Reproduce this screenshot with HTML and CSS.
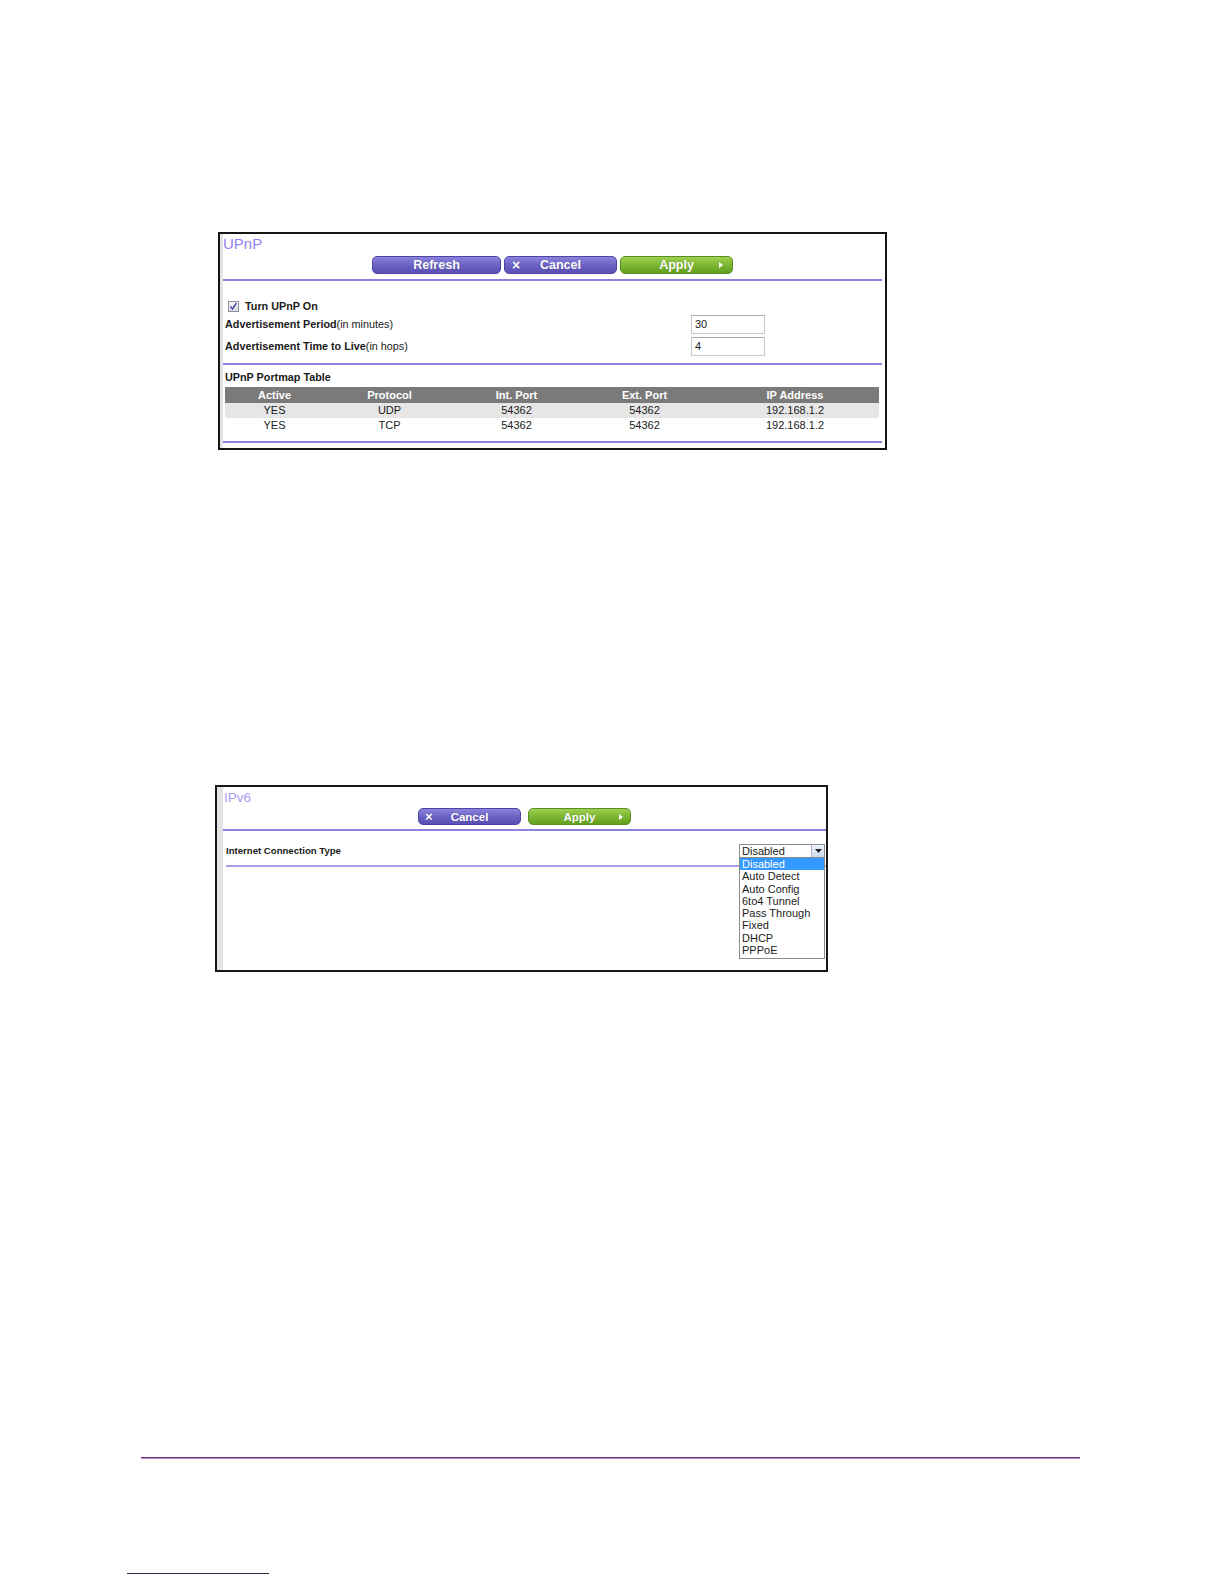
FILE: index.html
```html
<!DOCTYPE html>
<html>
<head>
<meta charset="utf-8">
<link rel="stylesheet" href="styles.css">
</head>
<body>
<div class="page">
  <div class="panel upnp">
    <div class="panel-inner">
      <div class="title">UPnP</div>
      <div class="btns">
        <span class="btn purple w-refresh">Refresh</span>
        <span class="btn purple w-cancel"><span class="x">×</span>Cancel</span>
        <span class="btn green w-apply">Apply<span class="arr"></span></span>
      </div>
      <div class="rule"></div>
      <div class="form">
        <div class="row check-row">
          <span class="cb"><svg width="11" height="11" viewBox="0 0 11 11"><path d="M2.5 5.5 L4.5 8 L8.5 2" fill="none" stroke="#4a4aa8" stroke-width="1.4"/></svg></span>
          <span class="b">Turn UPnP On</span>
        </div>
        <div class="row field-row">
          <span class="lbl"><span class="b">Advertisement Period</span>(in minutes)</span>
          <span class="inp">30</span>
        </div>
        <div class="row field-row">
          <span class="lbl"><span class="b">Advertisement Time to Live</span>(in hops)</span>
          <span class="inp">4</span>
        </div>
      </div>
      <div class="rule r2"></div>
      <div class="tbl-title b">UPnP Portmap Table</div>
      <table class="tbl">
        <thead>
          <tr><th class="c1">Active</th><th class="c2">Protocol</th><th class="c3">Int. Port</th><th class="c4">Ext. Port</th><th class="c5">IP Address</th></tr>
        </thead>
        <tbody>
          <tr class="odd"><td>YES</td><td>UDP</td><td>54362</td><td>54362</td><td>192.168.1.2</td></tr>
          <tr><td>YES</td><td>TCP</td><td>54362</td><td>54362</td><td>192.168.1.2</td></tr>
        </tbody>
      </table>
      <div class="rule r3"></div>
    </div>
  </div>

  <div class="panel ipv6">
    <div class="panel-inner">
      <div class="title t2">IPv6</div>
      <div class="btns b2">
        <span class="btn purple small"><span class="x">×</span>Cancel</span>
        <span class="btn green small">Apply<span class="arr"></span></span>
      </div>
      <div class="rule"></div>
      <div class="conn-row">
        <span class="b conn-lbl">Internet Connection Type</span>
        <div class="sel-wrap">
          <div class="sel"><span>Disabled</span><span class="sel-btn"><svg width="7" height="4" viewBox="0 0 7 4"><path d="M0 0 H7 L3.5 4 Z" fill="#222"/></svg></span></div>
          <ul class="menu">
            <li class="on">Disabled</li>
            <li>Auto Detect</li>
            <li>Auto Config</li>
            <li>6to4 Tunnel</li>
            <li>Pass Through</li>
            <li>Fixed</li>
            <li>DHCP</li>
            <li>PPPoE</li>
          </ul>
        </div>
      </div>
      <div class="rule r4"></div>
    </div>
  </div>

  <div class="footer-line"></div>
  <div class="short-line"></div>
</div>
</body>
</html>
```

FILE: styles.css
```css
html, body {
  margin: 0;
  padding: 0;
  background: #fff;
}
body {
  font-family: "Liberation Sans", Arial, sans-serif;
  color: #1a1a1a;
}
.page {
  padding-top: 232px;
  width: 1224px;
  height: 1352px;
}
.b { font-weight: bold; }

.panel {
  border: 2px solid #161616;
  box-sizing: border-box;
  background: #fff;
}
.upnp {
  margin-left: 218px;
  width: 669px;
  height: 218px;
}
.panel-inner {
  border-left: 3px solid #e3e3e3;
  padding-right: 3px;
  height: 100%;
  box-sizing: border-box;
  position: relative;
}
.title {
  color: #9283ee;
  font-size: 15px;
  line-height: 16px;
  padding-top: 2px;
  height: 16px;
}
.btns {
  display: flex;
  justify-content: center;
  gap: 3px;
  margin-top: 4px;
}
.btn {
  position: relative;
  display: flex;
  align-items: center;
  justify-content: center;
  height: 18px;
  border-radius: 5px;
  color: #fff;
  font-weight: bold;
  font-size: 12.5px;
  box-sizing: border-box;
  text-shadow: 0 0 1px rgba(0,0,0,0.25);
}
.purple {
  background: linear-gradient(#8a82dc, #6a60c4 55%, #5a50b4);
  border: 1px solid #4d45a3;
}
.green {
  background: linear-gradient(#9fd04e, #79b431 55%, #62a020);
  border: 1px solid #5a8f24;
}
.w-refresh { width: 129px; }
.w-cancel { width: 113px; }
.w-apply { width: 113px; }
.x {
  position: absolute;
  left: 7px;
  top: 50%;
  transform: translateY(-52%);
  font-size: 14px;
}
.arr {
  position: absolute;
  right: 9px;
  top: 50%;
  margin-top: -3px;
  width: 0;
  height: 0;
  border-left: 4px solid #fff;
  border-top: 3px solid transparent;
  border-bottom: 3px solid transparent;
}
.rule {
  height: 2px;
  background: #8c80e0;
  margin-top: 5px;
}
.form {
  padding-left: 2px;
  padding-top: 18px;
}
.row {
  display: flex;
  align-items: center;
  font-size: 10.8px;
}
.check-row {
  height: 14px;
  padding-left: 3px;
}
.cb {
  width: 11px;
  height: 11px;
  border: 1px solid #8d8d9e;
  background: linear-gradient(#f4f4fa, #dcdce8);
  box-sizing: border-box;
  display: inline-flex;
  margin-right: 6px;
}
.cb svg { margin: -1px; }
.field-row {
  height: 20px;
  margin-top: 1px;
}
.field-row + .field-row { margin-top: 2px; }
.lbl {
  width: 466px;
  flex: none;
}
.inp {
  width: 74px;
  height: 19px;
  box-sizing: border-box;
  border: 1px solid #c8c8c8;
  border-top-color: #a9a9a9;
  padding-left: 3px;
  line-height: 17px;
  font-size: 11px;
}
.r2 { margin-top: 7px; }
.tbl-title {
  font-size: 10.8px;
  line-height: 14px;
  margin-top: 5px;
  padding-left: 2px;
}
.tbl {
  border-collapse: collapse;
  margin-left: 2px;
  margin-top: 3px;
  width: 654px;
  font-size: 11px;
  table-layout: fixed;
}
.tbl th, .tbl td {
  padding: 0;
  text-align: center;
  height: 15px;
  line-height: 15px;
}
.tbl th {
  background: #7a7a7a;
  color: #fff;
  font-weight: bold;
  height: 16px;
}
.tbl .c1 { width: 99px; }
.tbl .c2 { width: 131px; }
.tbl .c3 { width: 123px; }
.tbl .c4 { width: 133px; }
.tbl .c5 { width: 168px; }
.tbl tr.odd td { background: #e6e6e6; }
.r3 { margin-top: 8px; }

/* IPv6 */
.ipv6 {
  margin-top: 335px;
  margin-left: 215px;
  width: 613px;
  height: 187px;
}
.ipv6 .panel-inner {
  border-left-width: 6px;
  padding-right: 0;
}
.t2 {
  font-size: 13.5px;
  color: #a89ef2;
  padding-top: 3px;
  height: 15px;
  line-height: 15px;
  padding-left: 1px;
}
.b2 { gap: 7px; margin-top: 3px; }
.small {
  width: 103px;
  height: 17px;
  font-size: 11.5px;
}
.small .x { left: 6px; font-size: 13px; }
.small .arr { right: 7px; }
.b2 + .rule { margin-top: 4px; }
.conn-row {
  display: flex;
  align-items: flex-start;
  justify-content: space-between;
  padding-left: 3px;
  padding-right: 1px;
  margin-top: 13px;
  height: 15px;
}
.conn-lbl {
  font-size: 9.6px;
  line-height: 14px;
}
.sel-wrap {
  position: relative;
  width: 86px;
}
.sel {
  height: 14px;
  border: 1px solid #8a8a8a;
  box-sizing: border-box;
  display: flex;
  align-items: center;
  justify-content: space-between;
  font-size: 11px;
  padding-left: 2px;
  background: #fff;
}
.sel-btn {
  width: 12px;
  height: 12px;
  background: linear-gradient(#eef3fa, #cdd9ea);
  border-left: 1px solid #a8b4c8;
  display: flex;
  align-items: center;
  justify-content: center;
}
.menu {
  position: absolute;
  top: 14px;
  left: 0;
  width: 86px;
  box-sizing: border-box;
  margin: 0;
  padding: 0 0 2px 0;
  list-style: none;
  border: 1px solid #8a8a8a;
  border-top: none;
  background: #fff;
  font-size: 11px;
  z-index: 2;
}
.menu li {
  height: 12.3px;
  line-height: 12px;
  padding-left: 2px;
  color: #1c1c1c;
  white-space: nowrap;
}
.menu li.on {
  background: #3399ff;
  color: #fff;
}
.r4 {
  margin-top: 6px;
  margin-left: 3px;
  background: #a79ee9;
}

.footer-line {
  margin-top: 485px;
  margin-left: 141px;
  width: 939px;
  height: 2px;
  box-sizing: border-box;
  border-top: 1px solid #7a2f8b;
  border-bottom: 1px solid #b48fbe;
}
.short-line {
  margin-top: 114px;
  margin-left: 127px;
  width: 142px;
  height: 1px;
  background: #2a2a4a;
}
```
